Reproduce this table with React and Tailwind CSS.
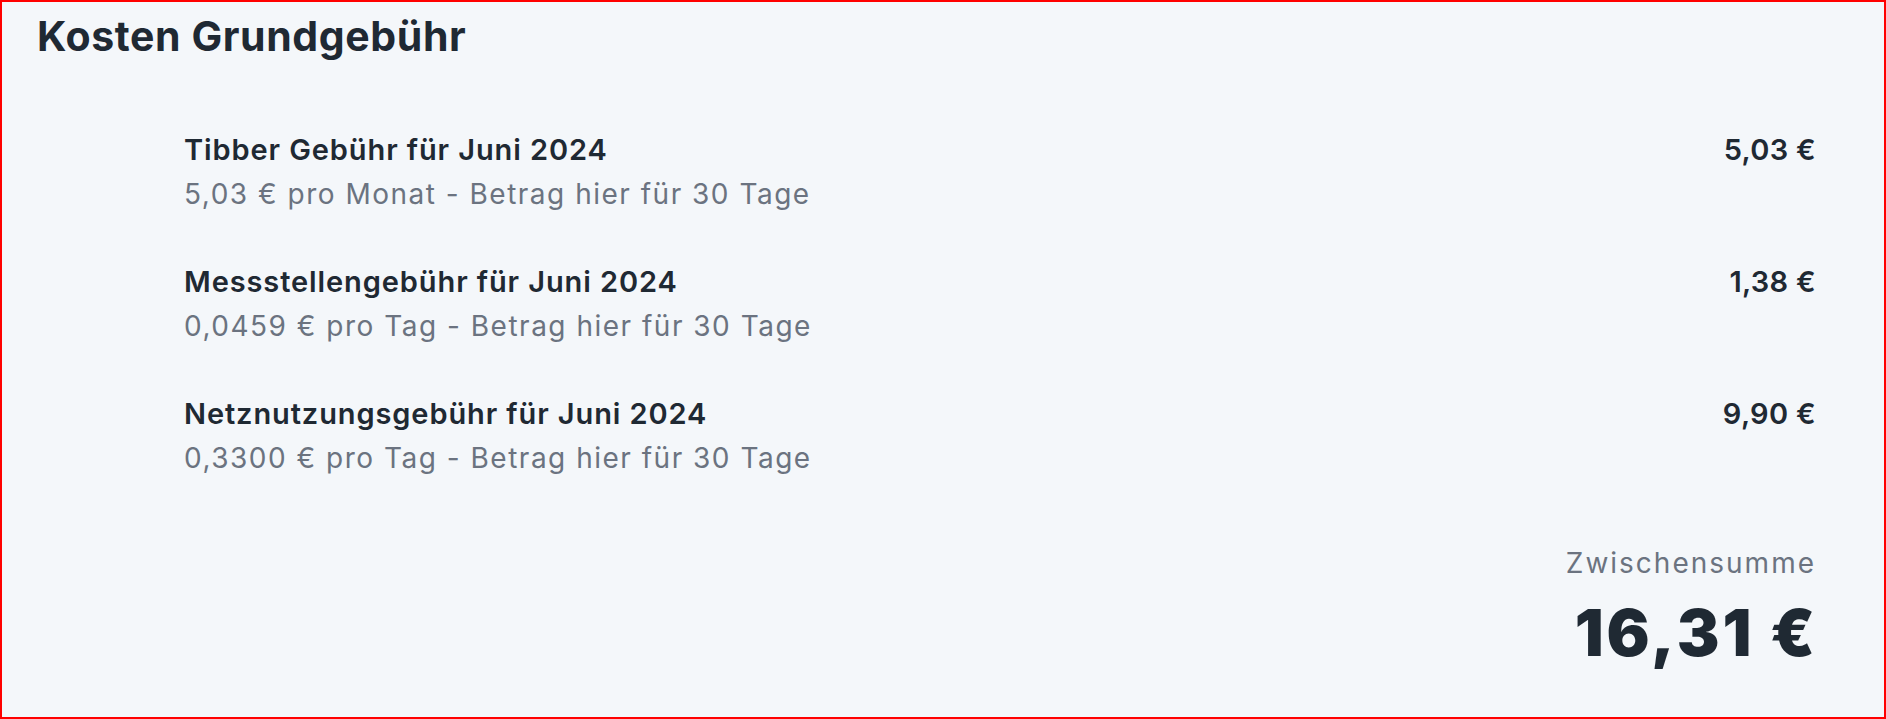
const items = [
  {
    title: 'Tibber Gebühr für Juni 2024',
    detail: '5,03 € pro Monat - Betrag hier für 30 Tage',
    amount: '5,03 €',
  },
  {
    title: 'Messstellengebühr für Juni 2024',
    detail: '0,0459 € pro Tag - Betrag hier für 30 Tage',
    amount: '1,38 €',
  },
  {
    title: 'Netznutzungsgebühr für Juni 2024',
    detail: '0,3300 € pro Tag - Betrag hier für 30 Tage',
    amount: '9,90 €',
  },
];

const App = () => {
  return (
    <div className="h-[719px] w-full border-2 border-[#ff0000] bg-[#f4f7fa] font-['Inter',sans-serif] text-[#1f2933]">
      <h1 className="pl-[35px] pt-[10px] text-[41px] font-bold leading-[48px] tracking-[0.6px]">Kosten Grundgebühr</h1>

      <div className="mt-[74px] flex flex-col gap-[56px] pl-[182px] pr-[68px]">
        {items.map((item) => (
          <div key={item.title} className="flex items-start justify-between">
            <div>
              <div className="text-[29px] font-semibold leading-[32px] tracking-[0.9px]">{item.title}</div>
              <div className="mt-[12px] text-[28px] leading-[32px] tracking-[1.5px] text-[#6b7380]">{item.detail}</div>
            </div>
            <div className="text-[29px] font-semibold leading-[32px] tracking-[0.3px]">{item.amount}</div>
          </div>
        ))}
      </div>

      <div className="mt-[73px] flex flex-col items-end pr-[68px]">
        <div className="text-[28px] leading-[32px] tracking-[2px] text-[#6b7380]">Zwischensumme</div>
        <div className="mr-[-2px] mt-[22px] text-[64px] font-black leading-[64px] tracking-[3px]">16,31 €</div>
      </div>
    </div>
  );
};

export default App;
